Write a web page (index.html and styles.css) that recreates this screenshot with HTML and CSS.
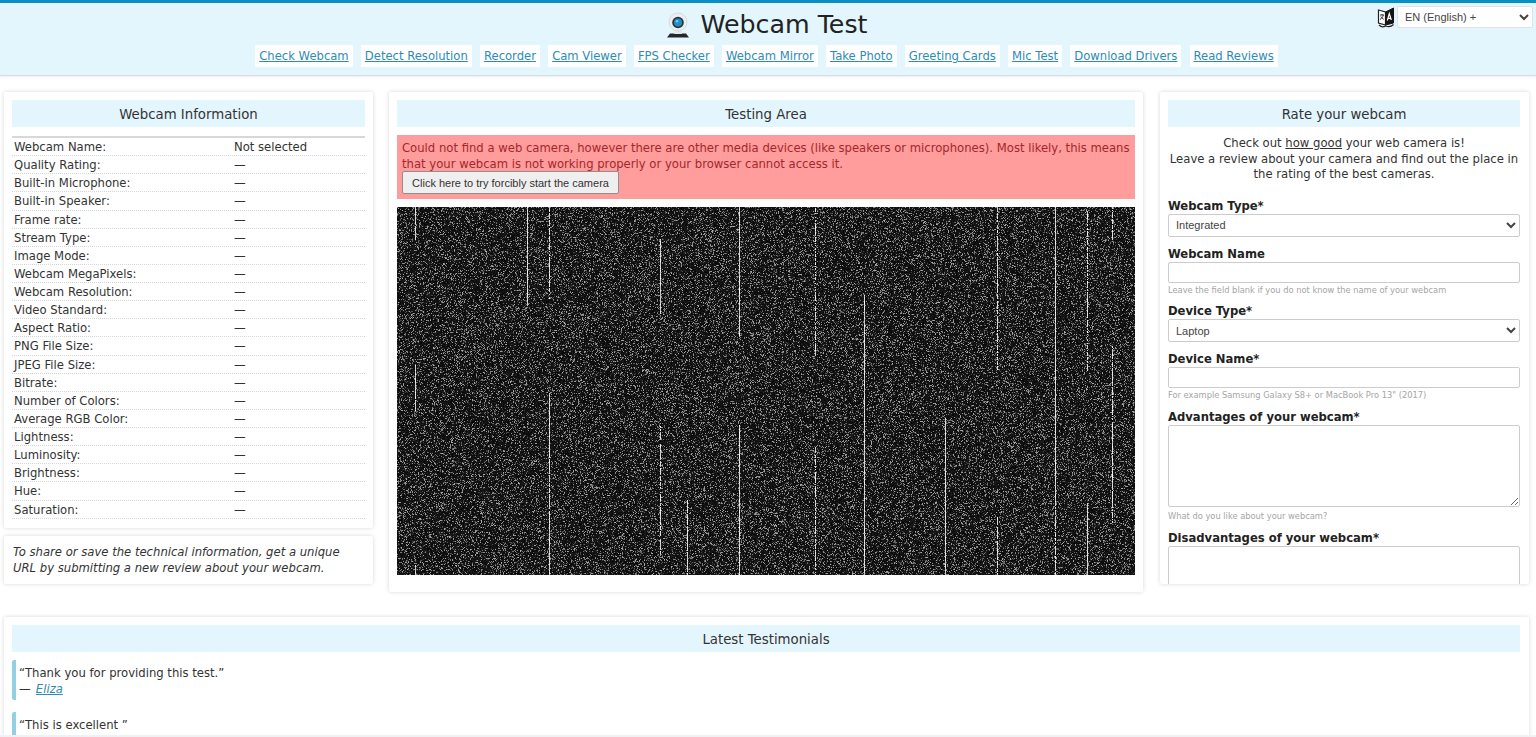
FILE: index.html
```html
<!DOCTYPE html>
<html lang="en">
<head>
<meta charset="utf-8">
<title>Webcam Test</title>
<link rel="stylesheet" href="styles.css">
</head>
<body>
<header class="site-header">
  <div class="lang">
    <svg class="lang-icon" width="18" height="21" viewBox="0 0 18 21"><path d="M1.500 3l7 2v13l-7-2z" fill="#fff" stroke="#222" stroke-width="1.200"/><path d="M8.500 5l8-4v15l-8 2z" fill="#151515" stroke="#151515"/><path d="M3 8h4M5 7v1M6.300 8c-.5 2.200-1.800 3.500-3.300 4.500M3.800 9.500c.7 1.300 1.800 2.200 3 2.800" fill="none" stroke="#222" stroke-width=".9"/><path d="M10.300 13.500l2-7 2 6.500M11.100 11.300h2.500" fill="none" stroke="#fff" stroke-width="1.200"/><path d="M2 18c2 2 4.500 2.200 6.500 1 3 1 6 .5 8-1.500" fill="none" stroke="#222" stroke-width="1.200"/></svg>
    <select class="lang-select"><option>EN (English) +</option></select>
  </div>
  <h1 class="title">
    <svg class="logo" width="24" height="26" viewBox="0 0 24 26"><path d="M1 25.500l3-4h16l3 4z" fill="#24282b"/><path d="M8 22l1.500-4h5l1.500 4z" fill="#e4e7ea"/><circle cx="12" cy="10" r="9" fill="#eceef0" stroke="#cfd3d6" stroke-width=".8"/><circle cx="12" cy="10.500" r="5.800" fill="#2b3338"/><circle cx="12" cy="10.500" r="4" fill="#1c8fc8"/><circle cx="11" cy="9.300" r="1.200" fill="#7cc9ec"/></svg>
    <span>Webcam Test</span>
  </h1>
  <nav class="nav">
    <a href="#">Check Webcam</a>
    <a href="#">Detect Resolution</a>
    <a href="#">Recorder</a>
    <a href="#">Cam Viewer</a>
    <a href="#">FPS Checker</a>
    <a href="#">Webcam Mirror</a>
    <a href="#">Take Photo</a>
    <a href="#">Greeting Cards</a>
    <a href="#">Mic Test</a>
    <a href="#">Download Drivers</a>
    <a href="#">Read Reviews</a>
  </nav>
</header>

<main class="columns">
  <div class="col-left">
    <section class="card info-card">
      <h2 class="card-title">Webcam Information</h2>
      <dl class="info">
        <div class="row"><dt>Webcam Name:</dt><dd>Not selected</dd></div>
        <div class="row"><dt>Quality Rating:</dt><dd>—</dd></div>
        <div class="row"><dt>Built-in Microphone:</dt><dd>—</dd></div>
        <div class="row"><dt>Built-in Speaker:</dt><dd>—</dd></div>
        <div class="row"><dt>Frame rate:</dt><dd>—</dd></div>
        <div class="row"><dt>Stream Type:</dt><dd>—</dd></div>
        <div class="row"><dt>Image Mode:</dt><dd>—</dd></div>
        <div class="row"><dt>Webcam MegaPixels:</dt><dd>—</dd></div>
        <div class="row"><dt>Webcam Resolution:</dt><dd>—</dd></div>
        <div class="row"><dt>Video Standard:</dt><dd>—</dd></div>
        <div class="row"><dt>Aspect Ratio:</dt><dd>—</dd></div>
        <div class="row"><dt>PNG File Size:</dt><dd>—</dd></div>
        <div class="row"><dt>JPEG File Size:</dt><dd>—</dd></div>
        <div class="row"><dt>Bitrate:</dt><dd>—</dd></div>
        <div class="row"><dt>Number of Colors:</dt><dd>—</dd></div>
        <div class="row"><dt>Average RGB Color:</dt><dd>—</dd></div>
        <div class="row"><dt>Lightness:</dt><dd>—</dd></div>
        <div class="row"><dt>Luminosity:</dt><dd>—</dd></div>
        <div class="row"><dt>Brightness:</dt><dd>—</dd></div>
        <div class="row"><dt>Hue:</dt><dd>—</dd></div>
        <div class="row"><dt>Saturation:</dt><dd>—</dd></div>
      </dl>
    </section>
    <section class="card note-card">
      <p class="note">To share or save the technical information, get a unique URL by submitting a new review about your webcam.</p>
    </section>
  </div>

  <section class="card test-card">
    <h2 class="card-title">Testing Area</h2>
    <div class="alert">
      <p class="alert-text">Could not find a web camera, however there are other media devices (like speakers or microphones). Most likely, this means that your webcam is not working properly or your browser cannot access it.</p>
      <button class="alert-btn">Click here to try forcibly start the camera</button>
    </div>
    <canvas id="noise" class="noise" width="738" height="368"></canvas>
  </section>

  <section class="card rate-card">
    <h2 class="card-title">Rate your webcam</h2>
    <p class="rate-intro">Check out <a href="#" class="plain-link">how good</a> your web camera is!<br>Leave a review about your camera and find out the place in the rating of the best cameras.</p>
    <form class="form">
      <label class="label">Webcam Type*</label>
      <select class="field field-select"><option>Integrated</option></select>
      <label class="label label-gap">Webcam Name</label>
      <input class="field field-input" type="text">
      <small class="hint">Leave the field blank if you do not know the name of your webcam</small>
      <label class="label label-gap">Device Type*</label>
      <select class="field field-select"><option>Laptop</option></select>
      <label class="label label-gap">Device Name*</label>
      <input class="field field-input" type="text">
      <small class="hint">For example Samsung Galaxy S8+ or MacBook Pro 13" (2017)</small>
      <label class="label label-gap">Advantages of your webcam*</label>
      <textarea class="field field-area"></textarea>
      <small class="hint hint-area">What do you like about your webcam?</small>
      <label class="label label-gap">Disadvantages of your webcam*</label>
      <textarea class="field field-area"></textarea>
    </form>
  </section>
</main>

<section class="card testimonials">
  <h2 class="card-title">Latest Testimonials</h2>
  <blockquote class="quote">“Thank you for providing this test.”<br>— <a href="#" class="author">Eliza</a></blockquote>
  <blockquote class="quote">“This is excellent ”<br>— <a href="#" class="author">Mark</a></blockquote>
</section>
<div class="bottom-strip"></div>
<script src="script.js"></script>
</body>
</html>
```
FILE: styles.css
```css
* { box-sizing: border-box; }
html, body { margin: 0; height: 737px; overflow: hidden; }
body {
  background: #fff;
  color: #333;
  font-family: "DejaVu Sans", Verdana, sans-serif;
  font-size: 11.630px;
  line-height: 16px;
}
.site-header {
  position: relative;
  height: 76px;
  background: #e3f6fe;
  border-top: 3px solid #0a8fc2;
  border-bottom: 1px solid #d9dde0;
  box-shadow: 0 1px 2px rgba(0,0,0,.08);
}
.title {
  margin: 0;
  height: 40px;
  display: flex;
  justify-content: center;
  align-items: center;
  gap: 10px;
  font-size: 25.300px;
  font-weight: 400;
  color: #222;
  padding: 3px 2px 0 0;
}
.logo { display: block; }
.nav {
  display: flex;
  justify-content: center;
  gap: 8.200px;
  margin-top: 2px;
  padding-right: 3px;
}
.nav a {
  background: #fff;
  padding: 2px 4px;
  height: 22px;
  color: #2e8bb8;
  font-size: 11.600px;
  line-height: 18px;
}
.lang {
  position: absolute;
  top: 3px;
  right: 3px;
  display: flex;
  align-items: center;
  gap: 2px;
}
.lang-icon { display: block; }
.lang-select {
  width: 136px;
  height: 22px;
  font-family: "Liberation Sans", Arial, sans-serif;
  font-size: 11px;
  color: #444;
  padding-left: 3px;
  background: #fff;
  border: 1px solid #e0e3e5;
  border-radius: 2px;
}
.columns {
  display: grid;
  grid-template-columns: 369px 754px 1fr;
  column-gap: 16px;
  padding: 16px 7px 0 4px;
  align-items: start;
}
.card {
  background: #fff;
  border-radius: 2px;
  box-shadow: 0 0 4px rgba(0,0,0,.16);
  padding: 8px;
}
.card-title {
  margin: 0;
  height: 27px;
  background: #e3f6fe;
  text-align: center;
  font-size: 13.300px;
  font-weight: 400;
  line-height: 29px;
  color: #333;
}
.col-left { display: flex; flex-direction: column; gap: 8px; }
.info-card { height: 436px; }
.info {
  margin: 9px 0 0;
  border-top: 2px solid #d8d8d8;
}
.row {
  display: flex;
  height: 18.130px;
  padding-left: 2px;
  border-bottom: 1px dotted #d6d6d6;
  line-height: 18px;
}
.row dt { width: 220px; }
.row dd { margin: 0; }
.note-card { height: 48px; padding: 8px 9px; }
.note { margin: 0; font-style: italic; }
.test-card { height: 500px; }
.alert {
  margin-top: 8px;
  height: 64px;
  background: #ff9c9c;
  color: #a3282c;
  padding: 5px 5px 0;
}
.alert-text { margin: 0 0 -1px; }
.alert-btn {
  display: block;
  width: 217px;
  height: 23px;
  padding: 0;
  background: #efefef;
  border: 1px solid #8f8f8f;
  border-radius: 2px;
  color: #333;
  font-family: "Liberation Sans", Arial, sans-serif;
  font-size: 11px;
}
.noise {
  display: block;
  width: 738px;
  height: 368px;
  margin-top: 8px;
  background: #000;
  filter: blur(.5px);
}
.rate-card { height: 492px; overflow: hidden; margin-left: 1px; padding-right: 9px; }
.rate-intro {
  margin: 9px 0 0;
  text-align: center;
  line-height: 15.700px;
}
.plain-link { color: #333; }
.form { display: flex; flex-direction: column; margin-top: 14.500px; }
.label {
  font-size: 11.600px;
  font-weight: 700;
  line-height: 16px;
  color: #222;
}
.label-gap { margin-top: 9px; }
.field {
  display: block;
  width: 100%;
  background: #fff;
  border: 1px solid #ccc;
  border-radius: 2px;
  flex: none;
}
.field-select {
  height: 23px;
  font-family: "Liberation Sans", Arial, sans-serif;
  font-size: 11px;
  color: #444;
  padding-left: 3px;
}
.field-input { height: 21px; }
.field-area { height: 82px; resize: vertical; }
.hint {
  display: block;
  margin-top: 1px;
  font-size: 8.300px;
  line-height: 12px;
  color: #a5a5a5;
  height: 10.500px;
}
.hint-area { margin-top: 3.500px; }
.testimonials { margin: 25px 7px 0 4px; padding-right: 9px; }
.quote {
  margin: 8px 0 0;
  padding: 5px 0 3px 3px;
  height: 40px;
  border-left: 4px solid #93d0e3;
  border-radius: 2px;
  line-height: 16px;
}
.quote + .quote { margin-top: 12px; }
.author { color: #2e8bb8; font-style: italic; margin-left: 1.500px; }
.bottom-strip {
  position: fixed;
  left: 0;
  right: 0;
  bottom: 0;
  height: 2px;
  background: #f0f1f2;
}
```
FILE: script.js
```js
var canvas = document.getElementById('noise');
var ctx = canvas.getContext('2d');
var w = canvas.width, h = canvas.height;
var img = ctx.createImageData(w, h);
var seed = 12345;
function rnd() { seed = (seed * 1664525 + 1013904223) >>> 0; return seed / 4294967296; }
var streaks = [18, 130, 152, 263, 290, 342, 418, 467, 548, 600, 658, 690, 715];
var boost = [];
for (var y = 0; y < h; y += 1) { boost.push(new Float32Array(w)); }
for (var i = 0; i < streaks.length; i += 1) {
  var start = 0;
  while (start < h) {
    var len = Math.floor(30 + rnd() * 150);
    var strength = rnd() < 0.65 ? 0.45 + rnd() * 0.5 : 0;
    for (var yy = start; yy < Math.min(h, start + len); yy += 1) { boost[yy][streaks[i]] = strength; }
    start += len;
  }
}
for (var r = 0; r < h; r += 1) {
  for (var x = 0; x < w; x += 1) {
    var b = boost[r][x];
    var lit = rnd() < 0.24 + b;
    var v = lit ? (b > 0 ? 190 + rnd() * 65 : 55 + rnd() * 120) : 6 + rnd() * 24;
    var o = (r * w + x) * 4;
    img.data[o] = v;
    img.data[o + 1] = v;
    img.data[o + 2] = v;
    img.data[o + 3] = 255;
  }
}
ctx.putImageData(img, 0, 0);
```
